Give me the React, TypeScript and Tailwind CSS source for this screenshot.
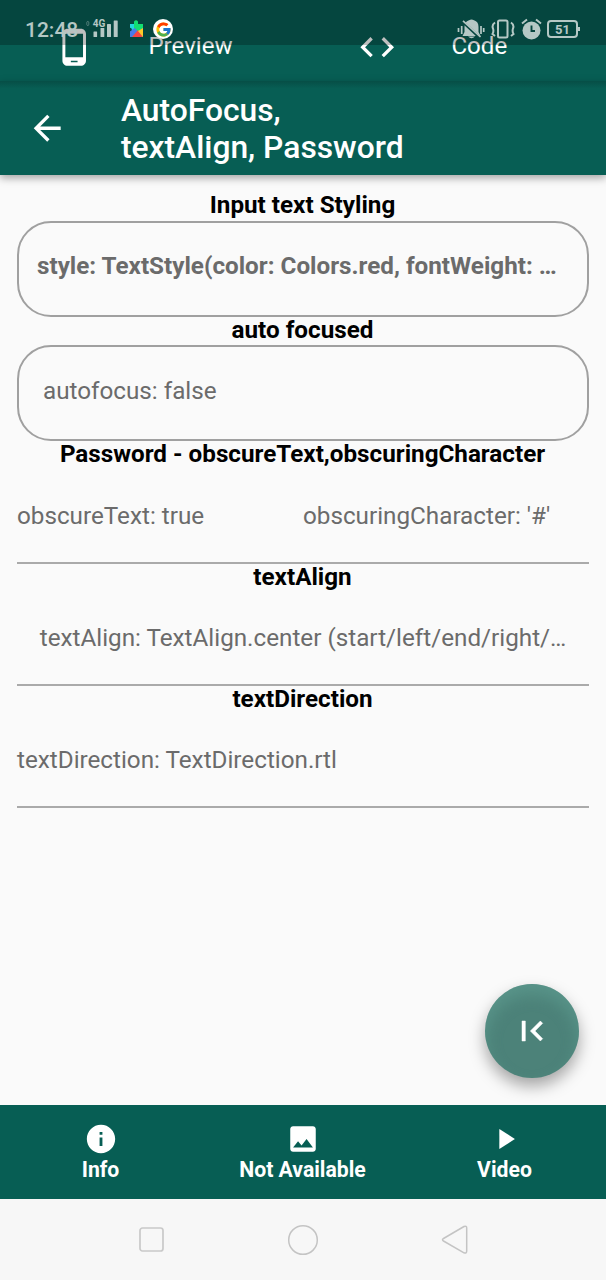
import type { ReactNode } from "react";
import {
  MdArrowBack,
  MdCode,
  MdImage,
  MdInfo,
  MdPhoneAndroid,
  MdPlayArrow,
} from "react-icons/md";
import { FcGoogle } from "react-icons/fc";

function StatusBar() {
  return (
    <div className="absolute inset-x-0 top-0 z-20 flex h-[45px] bg-black/25 pt-[15px] pl-[25px] text-[#b5c8c5]">
      <span className="w-[61px] text-[21px] leading-[30px] font-medium whitespace-nowrap">12:48</span>
      <svg className="mt-[2px] h-[24px] w-[34px] shrink-0" viewBox="0 0 34 24" fill="currentColor">
        <rect x="0.8" y="4.5" width="2" height="4" rx="1" fill="none" stroke="currentColor" strokeWidth="0.7" opacity="0.6" />
        <rect x="7.5" y="14.5" width="3.6" height="5.5" rx="0.5" />
        <rect x="14.5" y="11" width="3.8" height="9" rx="0.5" />
        <rect x="21" y="7" width="4" height="13" rx="0.5" />
        <rect x="27.7" y="3.5" width="4" height="16.5" rx="0.5" />
        <text x="6.8" y="10" fontSize="10" fontWeight="700" fontFamily="Roboto, sans-serif">4G</text>
      </svg>
      <svg className="mt-[4px] ml-[9px] h-[20px] w-[16px] shrink-0" viewBox="0 0 16 20">
        <path d="M1 5H14V18H1Z" fill="#20d9df" />
        <path d="M5 5V2.5Q7 0 9 2.5V5H14V11L9 13L5 10Z" fill="#12df72" />
        <path d="M1 12L6 9L9 13L3 18H1Z" fill="#477bea" />
        <path d="M3 18L9 11L14 18Z" fill="#f64443" />
        <path d="M9 12L14 9V18Z" fill="#ffc928" />
        <circle cx="1" cy="10.5" r="1.8" fill="#07463f" />
      </svg>
      <span className="mt-[4px] ml-[8px] flex h-[20px] w-[20px] shrink-0 items-center justify-center rounded-full bg-white">
        <FcGoogle size={17} />
      </span>
      <svg className="mt-[4px] ml-[284px] h-[21px] w-[28px] shrink-0" viewBox="0 0 28 21" fill="currentColor">
        <path d="M12 1.2Q14.5 -0.2 17 1.2Q21.5 2.5 21.5 8V13L23.5 17H5.5L7.5 13V8Q7.5 2.5 12 1.2ZM11 17.6H18Q14.5 21 11 17.6Z" />
        <path d="M5 2L23 19" stroke="#07463f" strokeWidth="3" />
        <path d="M6 1.8L23.5 18" stroke="currentColor" strokeWidth="1.7" />
        <path d="M1.5 9V13M4.7 7V15M24 7V15M26.7 9V13" fill="none" stroke="currentColor" strokeWidth="1.7" />
      </svg>
      <svg className="mt-[4px] ml-[6px] h-[21px] w-[24px] shrink-0" viewBox="0 0 24 21" fill="none" stroke="currentColor" strokeWidth="2">
        <rect x="7" y="1.5" width="9.5" height="17" rx="1.5" />
        <path d="M4 3.5Q0.5 6 2 9.5Q3 12.5 1.5 15L4 17M20 3.5Q23.5 6 22 9.5Q21 12.5 22.5 15L20 17" />
      </svg>
      <svg className="mt-[3px] ml-[6px] h-[22px] w-[21px] shrink-0" viewBox="0 0 21 22" fill="none" stroke="currentColor">
        <circle cx="10.5" cy="12.5" r="9" fill="currentColor" stroke="none" />
        <path d="M1 5.5L6 1.5M15 1.5L20 5.5" strokeWidth="2" />
        <path d="M10.5 7.5V13H14" stroke="#07463f" strokeWidth="1.9" />
      </svg>
      <span className="mt-[5px] ml-[5px] flex h-[18px] w-[31px] shrink-0 items-center justify-center rounded-[4px] border-2 border-current text-[13px] leading-none font-bold">
        51
      </span>
      <span className="mt-[12px] h-[4px] w-[2px] bg-current" />
    </div>
  );
}

function SectionLabel({ children }: { children: ReactNode }) {
  return (
    <h2 className="h-[28px] pr-px text-center text-[24.24px] leading-[27px] font-bold whitespace-nowrap text-black">
      {children}
    </h2>
  );
}

function NavItem({ icon, label }: { icon: ReactNode; label: string }) {
  return (
    <div className="flex flex-1 flex-col items-center pt-[17px]">
      {icon}
      <span className="-ml-px text-[21.2px] leading-[27px] font-bold whitespace-nowrap">{label}</span>
    </div>
  );
}

export default function App() {
  return (
    <div className="relative flex h-[1280px] w-[606px] flex-col overflow-hidden bg-[#fafafa] font-['Roboto',sans-serif]">
      <StatusBar />
      <div className="flex h-[81px] shrink-0 bg-[#075e54] text-white">
        <div className="flex w-[303px] pt-[27px] pl-[54px]">
          <MdPhoneAndroid size={40.4} />
          <span className="ml-[54px] text-[24.1px] leading-[39px]">Preview</span>
        </div>
        <div className="flex w-[303px] pt-[27px] pl-[54px]">
          <MdCode size={40.4} />
          <span className="ml-[54px] text-[24.1px] leading-[39px]">Code</span>
        </div>
      </div>
      <header className="z-10 flex h-[94px] shrink-0 bg-[#075e54] bg-linear-to-b from-[#064e46] to-[#075e54] to-8% pl-[27px] text-white shadow-[0_3px_8px_rgba(0,0,0,0.35)]">
        <MdArrowBack size={40.4} className="mt-[27px]" />
        <h1 className="mt-[11px] ml-[53.5px] text-[31.8px] leading-[37px] font-medium whitespace-nowrap">
          AutoFocus,
          <br />
          textAlign, Password
        </h1>
      </header>
      <main className="flex h-[930px] shrink-0 flex-col px-[17px] pt-[17px] text-[24.24px] leading-[28px] text-[#6b6b6b]">
        <SectionLabel>Input text Styling</SectionLabel>
        <div className="mt-px flex h-[96px] items-center rounded-[34px] border-2 border-[#a0a0a0] pb-[7px] pl-[18px] font-bold whitespace-nowrap">
          style: TextStyle(color: Colors.red, fontWeight: …
        </div>
        <SectionLabel>auto focused</SectionLabel>
        <div className="flex h-[96px] items-center rounded-[34px] border-2 border-[#a0a0a0] pb-[5px] pl-[24px] whitespace-nowrap">
          autofocus: false
        </div>
        <SectionLabel>Password - obscureText,obscuringCharacter</SectionLabel>
        <div className="flex h-[95px] border-b-2 border-[#aaa] pt-[33px] whitespace-nowrap">
          <span className="w-1/2">obscureText: true</span>
          <span className="w-1/2">obscuringCharacter: '#'</span>
        </div>
        <SectionLabel>textAlign</SectionLabel>
        <div className="h-[94px] border-b-2 border-[#aaa] pt-[32px] text-center whitespace-nowrap">
          textAlign: TextAlign.center (start/left/end/right/…
        </div>
        <SectionLabel>textDirection</SectionLabel>
        <div className="h-[94px] border-b-2 border-[#aaa] pt-[32px] whitespace-nowrap">
          textDirection: TextDirection.rtl
        </div>
      </main>
      <button
        aria-label="First page"
        className="absolute top-[984px] left-[485px] flex h-[94px] w-[94px] items-center justify-center rounded-full bg-[#4c8279] text-white shadow-[0_8px_16px_rgba(0,0,0,0.35),inset_0_10px_16px_rgba(105,170,158,0.45)]"
      >
        <svg className="h-[40px] w-[40px]" viewBox="0 0 24 24" fill="currentColor" stroke="currentColor" strokeWidth="0.3">
          <path d="M18.41 16.59L13.82 12l4.59-4.59L17 6l-6 6 6 6zM6 6h2v12H6z" />
        </svg>
      </button>
      <nav className="flex h-[94px] shrink-0 bg-[#075e54] text-white">
        <NavItem icon={<MdInfo size={34} />} label="Info" />
        <NavItem icon={<MdImage size={34} />} label="Not Available" />
        <NavItem icon={<MdPlayArrow size={34} />} label="Video" />
      </nav>
      <div className="flex h-[81px] shrink-0 items-center bg-[#f7f7f7] pl-[136px]">
        <svg className="h-[32px] w-[32px]" viewBox="0 0 32 32" fill="none" stroke="#c9c9c9" strokeWidth="1.7">
          <rect x="4" y="4" width="23" height="23" rx="2.5" />
        </svg>
        <svg className="ml-[119px] h-[32px] w-[32px]" viewBox="0 0 32 32" fill="none" stroke="#c4c4c4" strokeWidth="1.5">
          <circle cx="16" cy="16" r="14.3" />
        </svg>
        <svg className="ml-[120px] h-[32px] w-[32px]" viewBox="0 0 32 32" fill="none" stroke="#c4c4c4" strokeWidth="1.5" strokeLinejoin="round">
          <path d="M4.5 14.5L25 2.5Q27.7 1.5 27.7 4V27Q27.7 29.8 25 28.8L4.5 17Q2.5 15.7 4.5 14.5Z" />
        </svg>
      </div>
    </div>
  );
}
